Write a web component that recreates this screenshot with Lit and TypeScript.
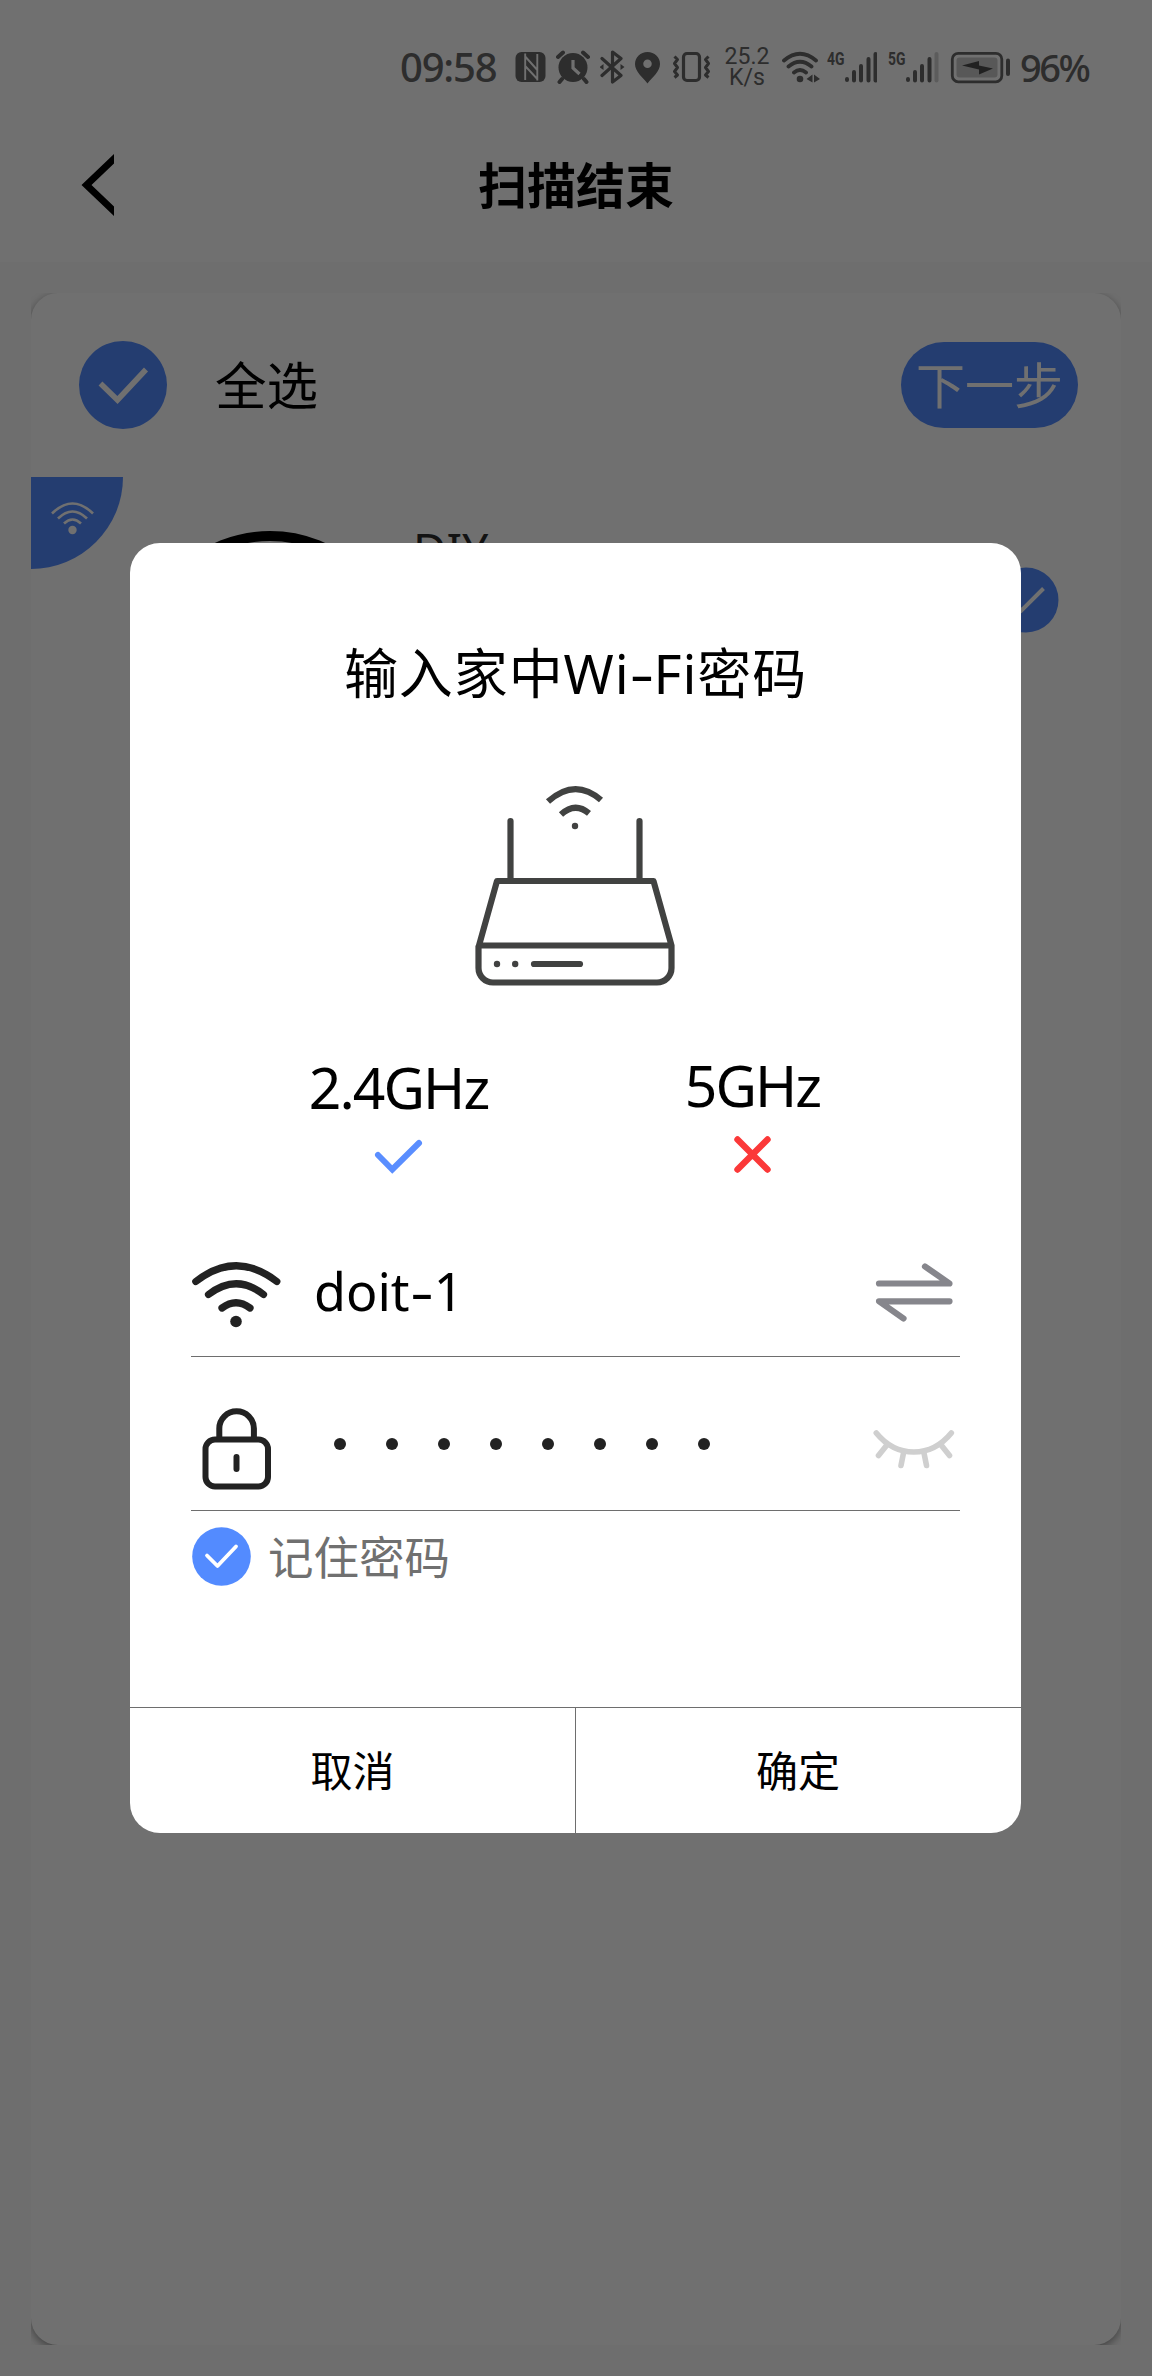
import { LitElement, html, css, svg } from "lit";
import { customElement } from "lit/decorators.js";

/** Wraps drawing content in an svg whose user units equal screen pixels. */
const icon = (x: number, y: number, w: number, h: number, content: unknown) =>
  html`<svg class="icon" width=${w} height=${h} viewBox="${x} ${y} ${w} ${h}" fill="none">${content}</svg>`;

@customElement("status-bar")
class StatusBar extends LitElement {
  static styles = css`
    :host { display: block; height: 108px; color: #666; font-family: "Noto Sans", "Noto Sans CJK SC", sans-serif; }
    .bar { display: flex; height: 34px; padding: 50px 0 0 400px; align-items: center; }
    .icon { display: block; flex: none; }
    .time { width: 114px; flex: none; font: 500 40px/34px "Noto Sans", sans-serif; letter-spacing: -1.2px; white-space: nowrap; }
    .rate { width: 50px; margin: 0 1px 0 7px; flex: none; display: flex; flex-direction: column; font: 400 23px/21px Roboto, sans-serif; text-align: center; }
    .net { flex: none; align-self: flex-start; width: 17px; font: 700 18.5px/18px "Roboto", sans-serif; transform: scaleX(.75); transform-origin: 0 0; white-space: nowrap; }
    .n4 { margin-left: 5px; margin-right: 1px; }
    .n5 { margin-left: 11px; margin-right: 1px; }
    .batt { display: flex; }
    .pct { margin-left: 9px; font: 500 38px/34px "Noto Sans", sans-serif; letter-spacing: -2.5px; white-space: nowrap; }
  `;
  render() {
    return html`<div class="bar">
      <span class="time">09:58</span>
      ${icon(514, 50, 42, 34, svg`
        <rect x="515.5" y="52" width="30" height="30" rx="6" fill="#666"/>
        <path d="M525.200 53.500V80M537.300 54V80.500M525.200 56.500L537.300 70M525.200 66L537.300 79" stroke="#fff" stroke-width="1.900"/>`)}
      ${icon(556, 50, 44, 34, svg`
        <circle cx="573" cy="67.500" r="14.500" fill="#666"/>
        <path d="M558 57l5-4.500M588 57l-5-4.500M562 79l-2.500 3M584 79l2.500 3" stroke="#666" stroke-width="4" stroke-linecap="round"/>
        <path d="M573 60v8l6.500 6" stroke="#fff" stroke-width="3.200"/>`)}
      ${icon(600, 50, 34, 34, svg`
        <path d="M602 58.500l19 17L612.500 82V52l8.500 6.500-19 17" stroke="#666" stroke-width="3.200" stroke-linejoin="round" stroke-linecap="round"/>
        <path d="M599.500 67l4-3v6zM624.500 67l-4-3v6z" fill="#666"/>`)}
      ${icon(634, 50, 38, 34, svg`
        <path fill-rule="evenodd" d="M647.500 52c-7 0-12.500 5.200-12.500 12 0 7.500 7.500 13 12.500 19.500C652.500 77 660 71.500 660 64c0-6.800-5.500-12-12.500-12zm0 7.500a4 4 0 1 1 0 8.500 4 4 0 0 1 0-8.500z" fill="#666"/>`)}
      ${icon(672, 50, 43, 34, svg`
        <rect x="683.500" y="53.500" width="16" height="27" rx="3.500" stroke="#666" stroke-width="3.200"/>
        <path d="M674.500 56.500l3 3-3 4 3 4-3 4 3 3.500-3 2.500M708.500 56.500l-3 3 3 4-3 4 3 4-3 3.500 3 2.500" stroke="#666" stroke-width="3" stroke-linejoin="round"/>`)}
      <div class="rate"><span>25.2</span><span>K/s</span></div>
      ${icon(773, 50, 49, 34, svg`
        <path d="M784 60.500q16-13.500 32 0M788.500 66.500q11.500-9.500 23 0M794 72.500q6-5 12 0" stroke="#666" stroke-width="3.800" stroke-linecap="round"/>
        <circle cx="800" cy="79" r="3.300" fill="#666"/>
        <path d="M806.500 79l6-4.500v8zM820 79l-6-4.500v8z" fill="#666"/>`)}
      <span class="net n4">4G</span>
      ${icon(845, 50, 32, 34, svg`
        <path d="M847 79v1M854 72v8.500M861 66v14.500M868.500 59v21.500M875.500 54v26.500" stroke="#666" stroke-width="4" stroke-linecap="round"/>`)}
      <span class="net n5">5G</span>
      ${icon(906, 50, 44, 34, svg`
        <path d="M908 79v1M915 72v8.500M922 66v14.500M929.500 59v21.500" stroke="#666" stroke-width="4" stroke-linecap="round"/>
        <path d="M936.500 54v26.500" stroke="#d2d2d2" stroke-width="4" stroke-linecap="round"/>`)}
      <span class="batt">${icon(950, 50, 61, 34, svg`
        <rect x="952.300" y="53.300" width="49.500" height="28.500" rx="6" stroke="#666" stroke-width="2.800"/>
        <rect x="956.500" y="57.500" width="41" height="20" rx="3" fill="#c8c8c8"/>
        <path d="M1008 60.500v13.500" stroke="#666" stroke-width="4" stroke-linecap="round"/>
        <path d="M962 65.500l17-4.500v4.500l14 3-14 6v-5z" fill="#4c4c4c"/>`)}</span>
      <span class="pct">96%</span>
    </div>`;
  }
}

@customElement("scan-page")
class ScanPage extends LitElement {
  static styles = css`
    :host { display: block; height: 2376px; background: #fafafa; color: #000; font-family: "Noto Sans", "Noto Sans CJK SC", sans-serif; }
    .icon { display: block; flex: none; }
    .head { background: #fff; height: 262px; }
    .nav { display: grid; grid-template-columns: 80px 1fr 80px; padding: 0 40px; height: 154px; align-items: center; }
    .nav .icon { margin-left: 38px; }
    .title { text-align: center; padding-bottom: 5px; font: 700 49px/75px "Noto Sans CJK SC", sans-serif; }
    .clip { width: 1090px; height: 2052px; margin: 31px 31px 0; overflow: hidden; }
    .card { height: 100%; background: #fff; border-radius: 27px; box-shadow: 0 3px 9px rgba(0,0,0,.4); }
    .all { display: flex; height: 184px; align-items: center; padding: 0 43px 0 48px; }
    .label { flex: 1; margin-left: 48px; padding-bottom: 5px; font: 400 51.500px/70px "Noto Sans CJK SC", sans-serif; }
    .next { width: 177px; height: 86px; border-radius: 43px; background: #538bff; color: #fff; text-align: center; font: 400 49px/81px "Noto Sans CJK SC", sans-serif; }
    .row { display: flex; align-items: flex-start; }
    .dev { font: 400 46px/60px "Noto Sans", sans-serif; color: #2d2d2d; width: 553px; margin: 42px 0 0 15px; }
  `;
  render() {
    return html`
      <div class="head">
        <status-bar></status-bar>
        <div class="nav">
          ${icon(78, 150, 40, 70, svg`<path d="M114 154v9.500L91.500 185 114 206.500v9.500L81.500 185z" fill="#000"/>`)}
          <span class="title">扫描结束</span>
        </div>
      </div>
      <div class="clip"><div class="card">
        <div class="all">
          ${icon(79, 341, 88, 88, svg`<circle cx="123" cy="385" r="44" fill="#538bff"/><path d="M100.500 383.500l17 16.500L146 369.500" stroke="#fff" stroke-width="5.500"/>`)}
          <span class="label">全选</span>
          <span class="next">下一步</span>
        </div>
        <div class="row">
          ${icon(31, 477, 92, 92, svg`<path d="M31 477h92a92 92 0 0 1-92 92z" fill="#538bff"/>
            <path d="M52 513.500q20.500-20 41 0M58 518.500q14.500-14 29 0M64 523.500q8.500-8 17 0" stroke="#fff" stroke-width="2.600"/>
            <circle cx="72.500" cy="530" r="4.200" fill="#fff"/>`)}
          ${icon(123, 477, 275, 260, svg`<circle cx="270" cy="666" r="130" stroke="#000" stroke-width="10"/>`)}
          <span class="dev">DIY</span>
          ${icon(966, 477, 93, 160, svg`<circle cx="1026" cy="600" r="32.500" fill="#538bff"/><path d="M1009 598l12.500 12.500L1043.500 588.500" stroke="#fff" stroke-width="4"/>`)}
        </div>
      </div></div>`;
  }
}

@customElement("wifi-dialog")
class WifiDialog extends LitElement {
  static styles = css`
    :host { display: flex; flex-direction: column; width: 891px; height: 1290px; border-radius: 30px; background: #fff; overflow: hidden; color: #000; font-family: "Noto Sans", "Noto Sans CJK SC", sans-serif; }
    .icon { display: block; flex: none; }
    .title { margin-top: 90px; height: 80px; text-align: center; font: 400 54px/80px "Noto Sans", "Noto Sans CJK SC", sans-serif; letter-spacing: .9px; white-space: nowrap; }
    .hyphen { display: inline-block; width: 24px; letter-spacing: 0; text-align: center; transform: scaleX(1.4); }
    .router { display: flex; justify-content: center; margin-top: 67px; }
    .bands { display: grid; grid-template-columns: 354px 354px; margin: 63px 0 0 91.5px; }
    .band { display: flex; flex-direction: column; align-items: center; height: 122px; }
    .freq { font: 400 57px/70px "Noto Sans", sans-serif; letter-spacing: -1.9px; margin: -1.5px 0 11.500px; }
    .five { margin: -3.500px 0 13.500px; }
    .field { display: flex; height: 119px; margin: 0 61px; border-bottom: 1px solid #6e6e6e; align-items: center; }
    .ssid { margin-top: 62px; }
    .pass { height: 153px; }
    .name { flex: 1; margin-left: 31px; padding-bottom: 12px; font: 400 52px/70px "Noto Sans", sans-serif; }
    .dots { flex: 1; display: flex; gap: 40px; margin: 21px 0 0 51px; }
    .dot { width: 12px; height: 12px; border-radius: 50%; background: #222; }
    .keep { display: flex; height: 92px; margin: 0 61px; align-items: center; color: #707070; font: 400 45.500px/70px "Noto Sans CJK SC", sans-serif; }
    .keep .icon { margin-right: 16px; }
    .keep span { padding-bottom: 5px; }
    .foot { display: grid; grid-template-columns: 445px 445px; margin-top: auto; border-top: 1px solid #6e6e6e; height: 125px; }
    .btn { text-align: center; font: 400 42px/121px "Noto Sans CJK SC", sans-serif; }
    .ok { border-left: 1px solid #6e6e6e; }
  `;
  render() {
    return html`
      <div class="title">输入家中Wi<span class="hyphen">-</span>Fi密码</div>
      <div class="router">${icon(470, 780, 211, 210, svg`
        <g stroke="#414241" stroke-width="6.200" stroke-linejoin="round">
          <path d="M548 801.500q27-24 53 -1.500M561 814.500q14-13 28-1.200"/>
          <path d="M510.500 821v59M639.500 821v59" stroke-linecap="round"/>
          <path d="M497 881H653.500L671.500 945.500H479zM478.500 945.500V968a14.500 14.500 0 0 0 14.500 14.500H657A14.500 14.500 0 0 0 671.500 968V945.500"/>
          <path d="M534 964H580" stroke-linecap="round"/>
        </g>
        <g fill="#414241"><circle cx="575" cy="826" r="3.200"/><circle cx="497" cy="964" r="3.200"/><circle cx="515.200" cy="964" r="3.200"/></g>`)}</div>
      <div class="bands">
        <div class="band"><span class="freq">2.4GHz</span>
          ${icon(369.5, 1133, 60, 42, svg`<path d="M378.500 1155L392.800 1169.500 419.500 1143" stroke="#5a8eff" stroke-width="6" stroke-linecap="round"/>`)}</div>
        <div class="band"><span class="freq five">5GHz</span>
          ${icon(723, 1133, 60, 42, svg`<path d="M737.500 1139.500l30 30M767.500 1139.500l-30 30" stroke="#fb3838" stroke-width="6.400" stroke-linecap="round"/>`)}</div>
      </div>
      <div class="field ssid">
        ${icon(191, 1237, 92, 119, svg`<path d="M195.800 1281.500q40.500-31.500 81 0M208.500 1294.500q28-21.500 55 0M222 1308q14-10.500 28 0" stroke="#222" stroke-width="7.200" stroke-linecap="round"/><circle cx="236" cy="1321.500" r="5.800" fill="#222"/>`)}
        <span class="name">doit<span class="hyphen">-</span>1</span>
        ${icon(870, 1237, 90, 119, svg`<path d="M879 1283.500H949.500L925 1266.500M949.500 1301.300H879L903.500 1318.500" stroke="#86868c" stroke-width="6.200" stroke-linecap="round" stroke-linejoin="round"/>`)}
      </div>
      <div class="field pass">
        ${icon(191, 1357, 92, 153, svg`<g stroke="#222" stroke-width="6"><rect x="205.500" y="1439.500" width="62.500" height="47" rx="9.500"/><path d="M219.300 1439v-10.500a17.300 17.300 0 0 1 34.600 0V1439"/><path d="M236.500 1457v12" stroke-linecap="round"/></g>`)}
        <div class="dots">${Array.from({ length: 8 }, () => html`<span class="dot"></span>`)}</div>
        ${icon(870, 1357, 90, 153, svg`<path d="M876.300 1433q15.500 19 37.500 19t37.500-19M886.500 1445.500l-8 10M903.500 1453l-2.500 12.500M924 1453l2.500 12.500M941.500 1445.500l8 10" stroke="#cfcfcf" stroke-width="5.600" stroke-linecap="round"/>`)}
      </div>
      <div class="keep">
        ${icon(191, 1511, 61, 92, svg`<circle cx="221.500" cy="1556.500" r="29.300" fill="#538bff"/><path d="M207 1555.500l10.500 10.500 18.500-19.500" stroke="#fff" stroke-width="3.800" stroke-linecap="round" stroke-linejoin="round"/>`)}
        <span>记住密码</span>
      </div>
      <div class="foot"><span class="btn">取消</span><span class="btn ok">确定</span></div>`;
  }
}

@customElement("app-root")
class AppRoot extends LitElement {
  static styles = css`
    :host { display: block; }
    .screen { position: relative; width: 1152px; height: 2376px; overflow: hidden; }
    .scrim { position: absolute; inset: 0; background: rgba(0, 0, 0, .56); }
    .modal { margin: 543px 0 0 130px; }
  `;
  render() {
    return html`<div class="screen">
      <scan-page></scan-page>
      <div class="scrim"><wifi-dialog class="modal"></wifi-dialog></div>
    </div>`;
  }
}
